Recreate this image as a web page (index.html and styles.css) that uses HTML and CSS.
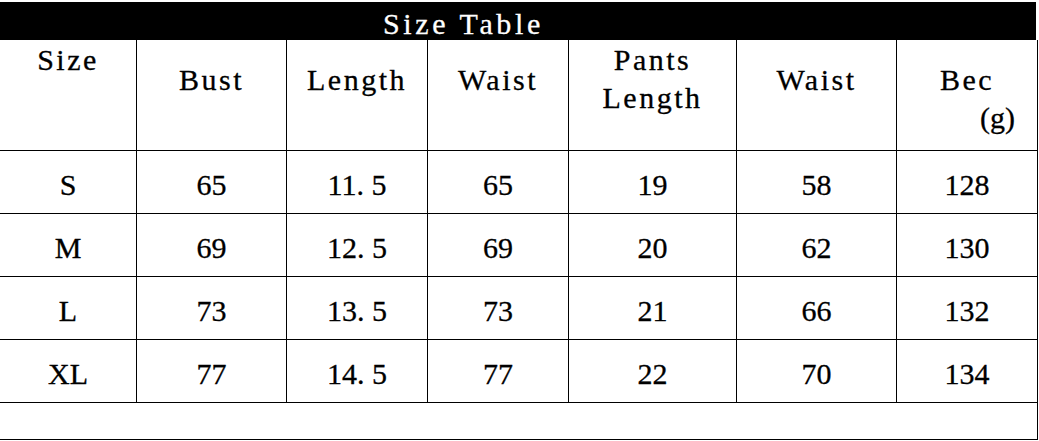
FILE: index.html
```html
<!DOCTYPE html>
<html lang="en">
<head>
<meta charset="utf-8">
<title>Size Table</title>
<link rel="stylesheet" href="styles.css">
</head>
<body>
<div class="sheet">
  <div class="title-bar"><span class="title">Size Table</span></div>
  <div class="table">
    <div class="cell head head-top">Size</div>
    <div class="cell head">Bust</div>
    <div class="cell head">Length</div>
    <div class="cell head">Waist</div>
    <div class="cell head head-top"><span>Pants</span><span>Length</span></div>
    <div class="cell head">Waist</div>
    <div class="cell head"><span>Bec</span><span class="unit">(g)</span></div>

    <div class="cell">S</div>
    <div class="cell">65</div>
    <div class="cell">11<span class="dot">.</span>5</div>
    <div class="cell">65</div>
    <div class="cell">19</div>
    <div class="cell">58</div>
    <div class="cell">128</div>

    <div class="cell">M</div>
    <div class="cell">69</div>
    <div class="cell">12<span class="dot">.</span>5</div>
    <div class="cell">69</div>
    <div class="cell">20</div>
    <div class="cell">62</div>
    <div class="cell">130</div>

    <div class="cell">L</div>
    <div class="cell">73</div>
    <div class="cell">13<span class="dot">.</span>5</div>
    <div class="cell">73</div>
    <div class="cell">21</div>
    <div class="cell">66</div>
    <div class="cell">132</div>

    <div class="cell">XL</div>
    <div class="cell">77</div>
    <div class="cell">14<span class="dot">.</span>5</div>
    <div class="cell">77</div>
    <div class="cell">22</div>
    <div class="cell">70</div>
    <div class="cell">134</div>

    <div class="cell blank"></div>
  </div>
</div>
</body>
</html>
```
FILE: styles.css
```css
html, body {
  margin: 0;
  padding: 0;
  background: #ffffff;
}

body {
  font-family: "Liberation Serif", "Times New Roman", serif;
  font-size: 30px;
  color: #000000;
  -webkit-text-stroke: 0.3px currentColor;
}

.sheet {
  width: 1038px;
  padding-top: 2px;
}

.title-bar {
  width: 1036px;
  height: 38px;
  box-sizing: border-box;
  background: #000000;
  color: #ffffff;
  padding-top: 5px;
  padding-left: 383px;
  line-height: 33px;
  white-space: nowrap;
}

.title {
  letter-spacing: 3.6px;
}

.table {
  display: grid;
  grid-template-columns: 137px 150px 141px 141px 168px 160px 141px;
  grid-template-rows: 111px repeat(4, 63px) 37px;
}

.cell {
  box-sizing: border-box;
  border-right: 1px solid #000000;
  border-bottom: 1px solid #000000;
  display: flex;
  align-items: center;
  justify-content: center;
  padding-top: 6px;
  line-height: 38px;
  white-space: nowrap;
}

.dot {
  letter-spacing: 7.5px;
}

.head {
  flex-direction: column;
  justify-content: flex-start;
  align-items: center;
  padding-top: 21px;
  letter-spacing: 2.5px;
}

.head-top {
  padding-top: 1px;
}

.unit {
  align-self: flex-end;
  padding-right: 22px;
  letter-spacing: 0;
}

.blank {
  grid-column: 1 / -1;
}
```
